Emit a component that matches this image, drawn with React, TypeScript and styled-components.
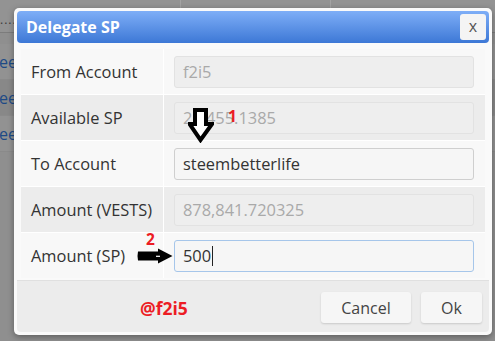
import React from 'react'
import styled, { createGlobalStyle } from 'styled-components';

const GlobalStyle = createGlobalStyle`
    html, body {
        margin: 0;
        padding: 0;
        background: #8f8f8f;
    }
    * {
        box-sizing: border-box;
    }
`;

type Field = {
    label: string;
    value: string;
    kind: 'disabled' | 'normal' | 'focused';
};

const fields: Field[] = [
    { label: 'From Account', value: 'f2i5', kind: 'disabled' },
    { label: 'Available SP', value: '21,455.1385', kind: 'disabled' },
    { label: 'To Account', value: 'steembetterlife', kind: 'normal' },
    { label: 'Amount (VESTS)', value: '878,841.720325', kind: 'disabled' },
    { label: 'Amount (SP)', value: '500', kind: 'focused' },
];

const behindRows = [false, true, false];

export default function App() {
  return (
    <Screen>
      <GlobalStyle />
      <BehindPage>
        <BehindHeader>
          <Dots>....</Dots>
          <HeaderCell $width={150} />
          <HeaderCell $width={147} />
        </BehindHeader>
        <BehindList>
          {behindRows.map((dark, i) => (
            <BehindRow key={i} $dark={dark}>
              <BehindLink>ee</BehindLink>
            </BehindRow>
          ))}
        </BehindList>
      </BehindPage>

      <Dialog>
        <TitleBar>
          <Title>Delegate SP</Title>
          <CloseButton>x</CloseButton>
        </TitleBar>
        <Body>
          <FormTable>
            {fields.map((f, i) => (
              <React.Fragment key={f.label}>
                <LabelCell $dark={i % 2 === 1}>{f.label}</LabelCell>
                <InputCell $dark={i % 2 === 1}>
                  <Input $kind={f.kind}>
                    {f.value}
                    {f.kind === 'focused' && <Caret />}
                  </Input>
                </InputCell>
              </React.Fragment>
            ))}
          </FormTable>
        </Body>
        <Footer>
          <Signature>@f2i5</Signature>
          <Button $width={90}>Cancel</Button>
          <Button $width={61}>Ok</Button>
        </Footer>

        {/* hand-drawn annotations over the dialog */}
        <DownArrow width="26" height="36" viewBox="0 0 26 36">
          <path d="M7 3 H18 V17 H24 L12.5 33 L1.5 17 H7 Z" fill="#fff" stroke="#000" strokeWidth="4" strokeLinejoin="miter" />
        </DownArrow>
        <StepNumber $left={214} $top={101}>1</StepNumber>

        <RightArrow width="36" height="16" viewBox="0 0 36 16">
          <path d="M1 3.5 Q0 8 1 12.5 H21 V15.5 L35.5 8 L21 0.5 V3.5 Z" fill="#000" />
          <path d="M19 8.3 H23" stroke="#fff" strokeWidth="1.2" />
        </RightArrow>
        <StepNumber $left={132} $top={224}>2</StepNumber>
      </Dialog>
    </Screen>
  )
}

const Screen = styled.div`
    position: relative;
    width: 495px;
    height: 341px;
    overflow: hidden;
    background: #8f8f8f;
    font-family: "Open Sans", "Liberation Sans", sans-serif;
`;

const BehindPage = styled.div`
    display: flex;
    flex-direction: column;
`;

const BehindHeader = styled.div`
    height: 33px;
    display: flex;
    align-items: flex-end;
    border-bottom: 1px solid #7c7c7c;
    background: #939393;
`;

const Dots = styled.span`
    width: 180px;
    padding: 0 0 6px 0;
    font-size: 12px;
    letter-spacing: 1px;
    color: #3a3a3a;
    line-height: 12px;
`;

const HeaderCell = styled.div<{ $width: number }>`
    width: ${p => p.$width}px;
    height: 100%;
    border-left: 1px solid #a3a3a3;
`;

const BehindList = styled.div`
    padding-top: 11px;
`;

const BehindRow = styled.div<{ $dark: boolean }>`
    height: 36px;
    display: flex;
    align-items: center;
    background: ${p => p.$dark ? '#888888' : '#929292'};
    border-bottom: 1px solid #8a8a8a;
`;

const BehindLink = styled.span`
    margin-left: -1px;
    font-size: 16px;
    color: #1d4a86;
`;

const Dialog = styled.div`
    position: absolute;
    left: 14px;
    top: 8px;
    width: 478px;
    height: 327px;
    padding: 3px;
    border-radius: 5px;
    background: #fafafa;
    box-shadow: 0 2px 6px rgba(0, 0, 0, 0.35);
    display: flex;
    flex-direction: column;
`;

const TitleBar = styled.div`
    height: 32px;
    display: flex;
    align-items: center;
    justify-content: space-between;
    padding: 0 3px 0 9px;
    border-radius: 4px;
    background: linear-gradient(#7eaef7, #3d78d6);
`;

const Title = styled.h1`
    margin: 0;
    font-size: 16px;
    font-weight: bold;
    color: #ffffff;
`;

const CloseButton = styled.button`
    width: 26px;
    height: 26px;
    padding: 0 0 2px 0;
    border: none;
    border-radius: 3px;
    background: #f4f4f4;
    color: #555;
    font-family: "Open Sans", "Liberation Sans", sans-serif;
    font-size: 16px;
`;

const Body = styled.div`
    padding: 6px 4px 2px;
`;

const FormTable = styled.div`
    display: grid;
    grid-template-columns: 142px 1fr;
    grid-auto-rows: 45px;
    gap: 1px;
    background: #ffffff;
`;

const LabelCell = styled.div<{ $dark: boolean }>`
    display: flex;
    align-items: center;
    padding-left: 10px;
    background: ${p => p.$dark ? '#ececec' : '#f8f8f8'};
    color: #333;
    font-size: 16.4px;
`;

const InputCell = styled.div<{ $dark: boolean }>`
    display: flex;
    align-items: center;
    padding: 0 11px 0 10px;
    background: ${p => p.$dark ? '#ececec' : '#f8f8f8'};
`;

const Input = styled.div<{ $kind: Field['kind'] }>`
    flex: 1;
    height: 32px;
    display: flex;
    align-items: center;
    padding-left: 8px;
    border-radius: 3px;
    font-size: 16.4px;
    border: 1px solid ${p => p.$kind === 'focused' ? '#a6c6ea' : p.$kind === 'normal' ? '#cfcfcf' : '#e2e2e2'};
    background: ${p => p.$kind === 'disabled' ? '#eeeeee' : '#f6f6f6'};
    color: ${p => p.$kind === 'disabled' ? '#a9a9a9' : '#333'};
`;

const Caret = styled.span`
    width: 1px;
    height: 20px;
    margin-left: 1px;
    background: #222;
`;

const Footer = styled.div`
    flex: 1;
    display: flex;
    align-items: flex-start;
    gap: 10px;
    padding: 11px 7px 0 123px;
    border-top: 1px solid #e0e0e0;
    border-radius: 0 0 4px 4px;
    background: #ececec;
`;

const Signature = styled.span`
    margin-right: auto;
    margin-top: 6px;
    font-size: 17.5px;
    line-height: 20px;
    font-weight: bold;
    color: #ec1c24;
`;

const Button = styled.button<{ $width: number }>`
    width: ${p => p.$width}px;
    height: 31px;
    border: none;
    border-radius: 3px;
    background: #f6f6f6;
    box-shadow: 0 1px 2px rgba(0, 0, 0, 0.15);
    color: #444;
    font-family: "Open Sans", "Liberation Sans", sans-serif;
    font-size: 16px;
`;

const DownArrow = styled.svg`
    position: absolute;
    left: 174px;
    top: 99px;
`;

const RightArrow = styled.svg`
    position: absolute;
    left: 123px;
    top: 240px;
`;

const StepNumber = styled.span<{ $left: number; $top: number }>`
    position: absolute;
    left: ${p => p.$left}px;
    top: ${p => p.$top}px;
    font-size: 15.5px;
    line-height: 15.5px;
    font-weight: bold;
    color: #ec1c24;
`;
